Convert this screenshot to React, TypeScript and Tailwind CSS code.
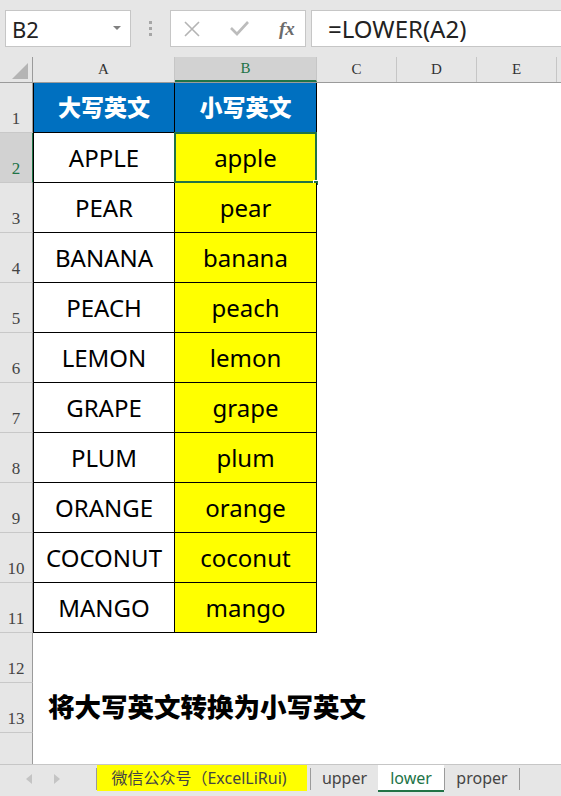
import React from "react";

const rows = [
  ["APPLE", "apple"],
  ["PEAR", "pear"],
  ["BANANA", "banana"],
  ["PEACH", "peach"],
  ["LEMON", "lemon"],
  ["GRAPE", "grape"],
  ["PLUM", "plum"],
  ["ORANGE", "orange"],
  ["COCONUT", "coconut"],
  ["MANGO", "mango"],
];

function RowHead({ n, active }: { n?: number; active?: boolean }) {
  return (
    <div
      className={
        "w-[33px] h-[50px] shrink-0 flex items-end justify-center pb-[1px] border-b border-b-[#c8c8c8] border-r font-['Liberation_Serif',serif] text-[17px] " +
        (active
          ? "bg-[#d2d2d2] text-[#217346] border-r-[#217346]"
          : "bg-[#e6e6e6] text-[#444] border-r-[#9b9b9b]")
      }
    >
      {n}
    </div>
  );
}

export default function App() {
  return (
    <div className="w-[561px] h-[796px] flex flex-col overflow-hidden bg-white font-['Noto_Sans','Noto_Sans_CJK_SC',sans-serif]">
      {/* formula bar */}
      <div className="h-[57px] shrink-0 bg-[#e6e6e6] flex items-center pl-[5px] gap-[5px]">
        <div className="w-[126px] h-[37px] bg-white border border-[#c6c6c6] flex items-center justify-between pl-[6px] pr-[9px]">
          <span className="text-[22px] text-[#222] leading-none">B2</span>
          <svg width="8" height="5" viewBox="0 0 8 5">
            <path d="M0 0 L8 0 L4 4 Z" fill="#808080" />
          </svg>
        </div>
        <div className="w-[29px] flex flex-col items-center gap-[3px]">
          <div className="w-[3px] h-[3px] bg-[#a6a6a6]" />
          <div className="w-[3px] h-[3px] bg-[#a6a6a6]" />
          <div className="w-[3px] h-[3px] bg-[#a6a6a6]" />
        </div>
        <div className="w-[136px] h-[37px] bg-white border border-[#c6c6c6] flex items-center pl-[13px] gap-[30px]">
          <svg width="16" height="16" viewBox="0 0 16 16">
            <path d="M1 1 L15 15 M15 1 L1 15" stroke="#b4b4b4" strokeWidth="1.6" fill="none" />
          </svg>
          <svg width="19" height="15" viewBox="0 0 19 15">
            <path d="M1 7 L7 13 L18 1" stroke="#bcbcbc" strokeWidth="2.6" fill="none" />
          </svg>
          <span className="font-['Liberation_Serif',serif] italic font-bold text-[19px] text-[#6b6b6b] leading-none">
            fx
          </span>
        </div>
        <div className="flex-1 h-[37px] bg-white border border-[#c6c6c6] border-r-0 flex items-center pl-[16px]">
          <span className="text-[24px] text-[#222] leading-none">=LOWER(A2)</span>
        </div>
      </div>

      {/* column headers */}
      <div className="h-[26px] shrink-0 flex bg-[#e6e6e6] border-b border-[#9b9b9b] font-['Liberation_Serif',serif] text-[15px] text-[#333]">
        <div className="w-[33px] flex items-end justify-end pr-[4px] pb-[3px] border-r border-[#9b9b9b]">
          <svg width="16" height="16" viewBox="0 0 16 16">
            <path d="M16 0 L16 16 L0 16 Z" fill="#b4b4b4" />
          </svg>
        </div>
        <div className="w-[142px] flex items-center justify-center border-r border-[#c6c6c6]">A</div>
        <div className="w-[142px] flex items-center justify-center bg-[#d2d2d2] text-[#217346] border-b-2 border-b-[#217346] border-r border-r-[#c6c6c6]">
          B
        </div>
        <div className="w-[80px] flex items-center justify-center border-r border-[#c6c6c6]">C</div>
        <div className="w-[80px] flex items-center justify-center border-r border-[#c6c6c6]">D</div>
        <div className="w-[80px] flex items-center justify-center border-r border-[#c6c6c6]">E</div>
        <div className="flex-1" />
      </div>

      {/* sheet body */}
      <div className="flex-1 flex flex-col">
        <div className="flex">
          <RowHead n={1} />
          <div className="w-[142px] h-[50px] bg-[#0070c0] border-l border-r border-b border-black flex items-center justify-center text-white font-black text-[23px]">
            大写英文
          </div>
          <div className="w-[142px] h-[50px] bg-[#0070c0] border-r border-b border-black flex items-center justify-center text-white font-black text-[23px]">
            小写英文
          </div>
        </div>
        {rows.map(([up, low], i) => (
          <div key={up} className="flex">
            <RowHead n={i + 2} active={i === 0} />
            <div className="w-[142px] h-[50px] bg-white border-l border-r border-b border-black flex items-center justify-center text-black text-[24px]">
              {up}
            </div>
            <div className="relative w-[142px] h-[50px] bg-[#ffff00] border-r border-b border-black flex items-center justify-center text-black text-[24px]">
              {low}
              {i === 0 && (
                <>
                  <div className="absolute left-[-1px] top-[-1px] right-[-1px] bottom-[-1px] border-2 border-[#217346]" />
                  <div className="absolute right-[-3px] bottom-[-4px] w-[6px] h-[6px] bg-[#217346] border border-white" />
                </>
              )}
            </div>
          </div>
        ))}
        <div className="flex">
          <RowHead n={12} />
        </div>
        <div className="flex">
          <RowHead n={13} />
          <div className="flex items-center pl-[15px] font-black text-[26.5px] text-black">
            将大写英文转换为小写英文
          </div>
        </div>
        <div className="flex flex-1">
          <div className="w-[33px] bg-[#e6e6e6] border-r border-[#9b9b9b]" />
        </div>
      </div>

      {/* sheet tabs */}
      <div className="h-[32px] shrink-0 bg-[#e6e6e6] border-t border-[#c6c6c6] flex items-start text-[16px] text-[#444]">
        <div className="w-[96px] h-[28px] flex items-center pl-[26px] gap-[22px]">
          <svg width="6" height="10" viewBox="0 0 6 10">
            <path d="M6 0 L6 10 L0 5 Z" fill="#c4c4c4" />
          </svg>
          <svg width="6" height="10" viewBox="0 0 6 10">
            <path d="M0 0 L0 10 L6 5 Z" fill="#c4c4c4" />
          </svg>
        </div>
        <div className="w-[1px] h-[22px] mt-[3px] bg-[#9b9b9b]" />
        <div className="w-[210px] h-[26px] bg-[#ffff00] flex items-center justify-center pr-[6px]">
          微信公众号（ExcelLiRui)
        </div>
        <div className="w-[1px] h-[22px] mt-[3px] ml-[3px] bg-[#9b9b9b]" />
        <div className="w-[67px] h-[26px] flex items-center justify-center">upper</div>
        <div className="w-[66px] h-[27px] bg-white border-b-2 border-[#217346] flex items-center justify-center text-[#217346]">
          lower
        </div>
        <div className="w-[1px] h-[22px] mt-[3px] bg-[#9b9b9b]" />
        <div className="w-[74px] h-[26px] flex items-center justify-center">proper</div>
        <div className="w-[1px] h-[22px] mt-[3px] bg-[#9b9b9b]" />
      </div>
    </div>
  );
}
